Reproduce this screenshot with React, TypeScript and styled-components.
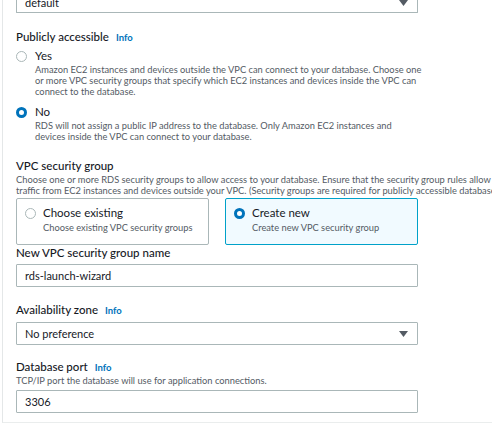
import React from "react";
import styled, { createGlobalStyle } from "styled-components";

const Global = createGlobalStyle`
  html, body { margin: 0; padding: 0; background: #fff; overflow: hidden; }
  body { font-family: Lato, "Open Sans", sans-serif; color: #16191f; }
`;

const Page = styled.div`
  width: 492px;
  height: 426px;
  overflow: hidden;
  background: #fff;
`;

const Card = styled.div`
  margin-left: 2px;
  width: 620px;
  height: 423px;
  border-left: 1px solid #e4e7e8;
  border-bottom: 1px solid #eaeded;
  padding-left: 13px;
  box-sizing: border-box;
  display: flex;
  flex-direction: column;
  & > * { flex: none; }
`;

const Field = styled.div<{ $mt?: number }>`
  display: flex;
  flex-direction: column;
  margin-top: ${(p) => p.$mt ?? 0}px;
`;

const Label = styled.div`
  font-size: 11.5px;
  line-height: 16px;
  height: 16px;
  font-weight: 500;
  color: #16191f;
  display: flex;
  align-items: baseline;
  gap: 7px;
`;

const Info = styled.span`
  font-size: 9.5px;
  font-weight: 700;
  color: #0073bb;
`;

const Desc = styled.div<{ $w?: number; $mt?: number }>`
  font-size: 9.3px;
  line-height: 11px;
  color: #545b64;
  max-width: ${(p) => (p.$w ? `${p.$w}px` : "none")};
  margin-top: ${(p) => p.$mt ?? 0}px;
`;

const Box = styled.div<{ $mt?: number }>`
  width: 402px;
  height: 23px;
  flex: none;
  box-sizing: border-box;
  border: 1px solid #aab7b8;
  border-radius: 1px;
  display: flex;
  align-items: center;
  justify-content: space-between;
  padding: 0 9px 0 8px;
  font-size: 11px;
  color: #16191f;
  margin-top: ${(p) => p.$mt ?? 0}px;
`;

const TopSelect = styled(Box)`
  margin-top: -10px;
  border-top: none;
  padding-top: 3px;
`;

const Arrow = () => (
  <svg width="9" height="6" viewBox="0 0 9 6">
    <polygon points="0,0 9,0 4.5,6" fill="#545b64" />
  </svg>
);

const RadioCircle = styled.span<{ $on?: boolean }>`
  display: block;
  width: 11px;
  height: 11px;
  box-sizing: border-box;
  border-radius: 50%;
  flex: none;
  background: #fff;
  border: ${(p) => (p.$on ? "3.5px solid #0073bb" : "1px solid #aab7b8")};
`;

const RadioRow = styled.div<{ $mt?: number }>`
  display: flex;
  gap: 8px;
  margin-top: ${(p) => p.$mt ?? 0}px;
`;

const RadioDot = styled.div`
  padding-top: 2.5px;
  flex: none;
`;

const RadioBody = styled.div`
  display: flex;
  flex-direction: column;
`;

const RadioTitle = styled.div`
  font-size: 11.5px;
  line-height: 16px;
  color: #16191f;
`;

const Tiles = styled.div`
  display: flex;
  gap: 16px;
  width: 402px;
  margin-top: 2px;
`;

const Tile = styled.div<{ $on?: boolean }>`
  flex: 1;
  height: 47px;
  box-sizing: border-box;
  border: 1px solid ${(p) => (p.$on ? "#00a1c9" : "#aab7b8")};
  background: ${(p) => (p.$on ? "#f1faff" : "#fff")};
  border-radius: 2px;
  padding: 6px 8px 0 8px;
  display: flex;
  gap: 7px;
`;

const Radio = ({
  on,
  title,
  children,
  mt,
}: {
  on?: boolean;
  title: string;
  children?: React.ReactNode;
  mt?: number;
}) => (
  <RadioRow $mt={mt}>
    <RadioDot>
      <RadioCircle $on={on} />
    </RadioDot>
    <RadioBody>
      <RadioTitle>{title}</RadioTitle>
      {children}
    </RadioBody>
  </RadioRow>
);

export default function App() {
  return (
    <Page>
      <Global />
      <Card>
        <TopSelect>
          <span>default</span>
          <Arrow />
        </TopSelect>

        <Field $mt={16}>
          <Label>
            Publicly accessible <Info>Info</Info>
          </Label>
          <Radio title="Yes" mt={3}>
            <Desc $w={392}>
              Amazon EC2 instances and devices outside the VPC can connect to your database. Choose one
              or more VPC security groups that specify which EC2 instances and devices inside the VPC can
              connect to the database.
            </Desc>
          </Radio>
          <Radio title="No" on mt={7}>
            <Desc $w={372}>
              RDS will not assign a public IP address to the database. Only Amazon EC2 instances and
              devices inside the VPC can connect to your database.
            </Desc>
          </Radio>
        </Field>

        <Field $mt={16}>
          <Label>VPC security group</Label>
          <Desc $w={490}>
            Choose one or more RDS security groups to allow access to your database. Ensure that the security group rules allow
            traffic from EC2 instances and devices outside your VPC. (Security groups are required for publicly accessible databases.)
          </Desc>
          <Tiles>
            <Tile>
              <RadioDot>
                <RadioCircle />
              </RadioDot>
              <RadioBody>
                <RadioTitle>Choose existing</RadioTitle>
                <Desc $mt={1}>Choose existing VPC security groups</Desc>
              </RadioBody>
            </Tile>
            <Tile $on>
              <RadioDot>
                <RadioCircle $on />
              </RadioDot>
              <RadioBody>
                <RadioTitle>Create new</RadioTitle>
                <Desc $mt={1}>Create new VPC security group</Desc>
              </RadioBody>
            </Tile>
          </Tiles>
        </Field>

        <Field>
          <Label>New VPC security group name</Label>
          <Box $mt={3}>
            <span>rds-launch-wizard</span>
          </Box>
        </Field>

        <Field $mt={15}>
          <Label>
            Availability zone <Info>Info</Info>
          </Label>
          <Box $mt={4}>
            <span>No preference</span>
            <Arrow />
          </Box>
        </Field>

        <Field $mt={14}>
          <Label>
            Database port <Info>Info</Info>
          </Label>
          <Desc>TCP/IP port the database will use for application connections.</Desc>
          <Box $mt={4}>
            <span>3306</span>
          </Box>
        </Field>
      </Card>
    </Page>
  );
}
